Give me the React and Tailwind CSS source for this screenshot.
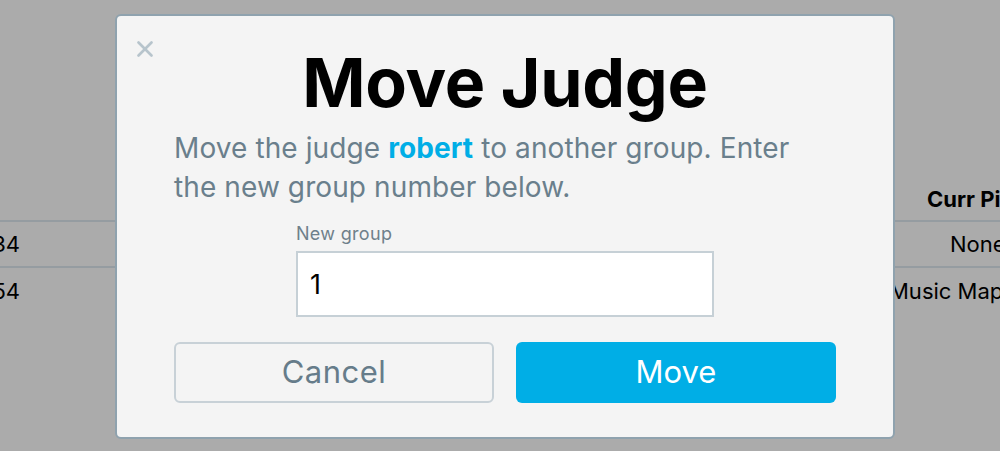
import { X } from "lucide-react";

function BackTable() {
  return (
    <div className="pt-[178px] text-[22px] text-black">
      <div className="flex h-[44px] items-center border-b-2 border-[#959ca1]">
        <div className="ml-auto w-[100px] pl-[27px] font-bold whitespace-nowrap">Curr Piece</div>
      </div>
      <div className="flex h-[46px] items-center border-b-2 border-[#959ca1]">
        <div className="w-[20px] text-right -ml-[40px] flex-none">
          <span className="inline-block w-[60px] text-right">134</span>
        </div>
        <div className="ml-auto w-[100px] pl-[50px] whitespace-nowrap">None</div>
      </div>
      <div className="flex h-[46px] items-center">
        <div className="w-[20px] text-right -ml-[40px] flex-none">
          <span className="inline-block w-[60px] text-right">154</span>
        </div>
        <div className="ml-auto mr-[1px] w-[110px] whitespace-nowrap">Music Maps</div>
      </div>
    </div>
  );
}

export default function App() {
  return (
    <div
      className="relative h-[451px] w-[1000px] overflow-hidden bg-[#ababab]"
      style={{ fontFamily: "Inter, 'Noto Sans', sans-serif" }}
    >
      <BackTable />
      <div className="absolute left-[115px] top-[14px] h-[425px] w-[780px] rounded-[6px] border-2 border-[#8fa2ae] bg-[#f4f4f4] px-[57px]">
        <button className="absolute left-[15px] top-[20px] text-[#b7c4cc]">
          <X className="h-[26px] w-[26px]" strokeWidth={2.5} />
        </button>
        <h1 className="pt-[32px] text-center text-[68px] font-bold leading-[1] tracking-[-0.3px] text-black">
          Move Judge
        </h1>
        <p className="mt-[13px] max-w-[640px] text-[28px] leading-[39px] tracking-[0.1px] text-[#6a7f8c]">
          Move the judge <span className="font-bold text-[#00aee6]">robert</span> to another group. Enter the new group
          number below.
        </p>
        <div className="mx-auto mt-[17px] w-[418px]">
          <label className="block text-[18px] leading-[20px] tracking-[0.3px] text-[#6f808b]">New group</label>
          <input
            defaultValue="1"
            className="mt-[7px] h-[66px] w-full border-2 border-[#c6d0d6] bg-white px-[12px] text-[27px] text-black outline-none"
          />
        </div>
        <div className="mt-[25px] flex justify-between">
          <button className="h-[61px] w-[320px] rounded-[6px] border-2 border-[#c8d1d7] text-[31px] tracking-[0.5px] text-[#667c8a]">
            Cancel
          </button>
          <button className="h-[61px] w-[320px] rounded-[6px] bg-[#00aee6] text-[31px] text-white">Move</button>
        </div>
      </div>
    </div>
  );
}
